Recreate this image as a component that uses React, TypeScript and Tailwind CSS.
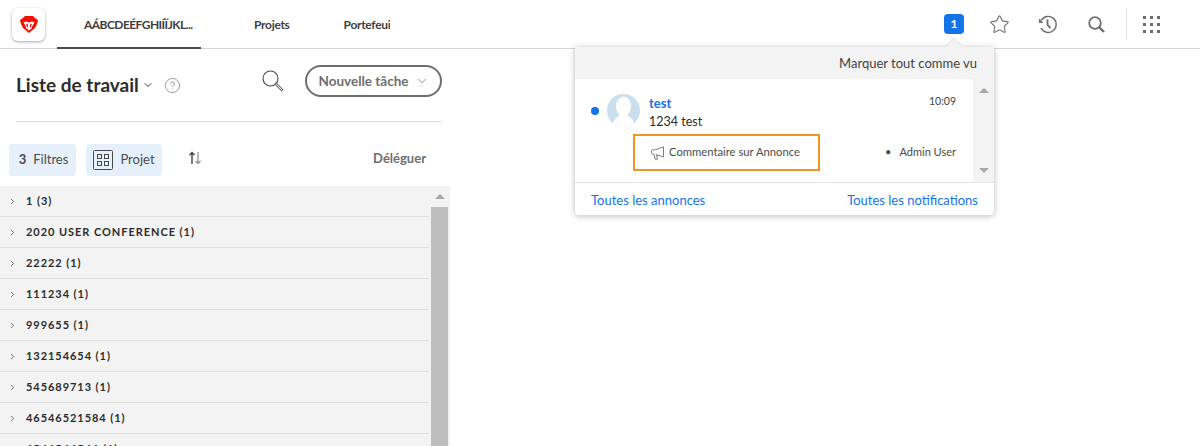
import { ChevronDown, ChevronRight, Star, HelpCircle } from "lucide-react";

const rows = [
  "1 (3)",
  "2020 USER CONFERENCE (1)",
  "22222 (1)",
  "111234 (1)",
  "999655 (1)",
  "132154654 (1)",
  "545689713 (1)",
  "46546521584 (1)",
  "6546546546 (1)",
];

function BraveLogo() {
  return (
    <svg width="18" height="18" viewBox="0 0 18 18">
      <path d="M5 0h8l2 2 3 2-1 4-2 4-6 5-6-5-2-4-1-4 3-2z" fill="#f50f00" />
      <path d="M3.500 6.500L6 5.500 9 6.500l3-1 2.500 1-2 3-1 3-2.500 2-2.500-2-1-3z" fill="#fff" />
      <path d="M6 7.500l2 1v3l-1-.5zM12 7.500l-2 1v3l1-.5z" fill="#f50f00" />
    </svg>
  );
}

function GridIcon() {
  return (
    <svg className="shrink-0" width="20" height="20" viewBox="0 0 20 20" fill="none" stroke="#4b4b4b" strokeWidth="1">
      <rect x="0.500" y="0.500" width="19" height="19" rx="1" />
      <rect x="4.500" y="4.500" width="4" height="4" />
      <rect x="11.500" y="4.500" width="4" height="4" />
      <rect x="4.500" y="11.500" width="4" height="4" />
      <rect x="11.500" y="11.500" width="4" height="4" />
    </svg>
  );
}

function SortIcon() {
  return (
    <svg width="14" height="14" viewBox="0 0 14 14" fill="none" strokeWidth="1.200">
      <path d="M4 13V1.500M1.500 4L4 1.500 6.500 4" stroke="#4b4b4b" strokeWidth="1.500" />
      <path d="M10 1v11.500M7.500 10l2.500 2.500 2.500-2.500" stroke="#8a8a8a" />
    </svg>
  );
}

function HistoryIcon() {
  return (
    <svg width="19" height="19" viewBox="0 0 19 19" fill="none" stroke="#6e6e6e" strokeWidth="1.400">
      <path d="M3.200 5.500A8 8 0 1 1 3 13" />
      <path d="M1 3.500v4.500h4.500z" fill="#6e6e6e" stroke="none" />
      <path d="M9.500 4.500v5.500l3 3" strokeWidth="1.800" />
    </svg>
  );
}

function TopSearchIcon() {
  return (
    <svg width="17" height="17" viewBox="0 0 17 17" fill="none" stroke="#6e6e6e">
      <circle cx="7" cy="7" r="5.800" strokeWidth="1.800" />
      <path d="M11 11l5 5" strokeWidth="2.400" />
    </svg>
  );
}

function ListSearchIcon() {
  return (
    <svg width="22" height="22" viewBox="0 0 22 22" fill="none" stroke="#4b4b4b">
      <circle cx="8.500" cy="8.500" r="7.500" strokeWidth="1.100" />
      <path d="M14 14l6 6" stroke="#6e6e6e" strokeWidth="2.600" strokeLinecap="round" />
      <path d="M14.500 14.500l5.500 5.500" stroke="#fff" strokeWidth="0.900" strokeLinecap="round" />
    </svg>
  );
}

function MegaphoneIcon() {
  return (
    <svg width="13" height="14" viewBox="0 0 13 14" fill="none" stroke="#6e6e6e" strokeWidth="0.900">
      <path d="M12.500 0.800L4.500 3.800H1.500L0.500 5v2l1 1.200h1.500l1 5h2.500l-1-4.500 7 2.200z" strokeLinejoin="round" />
    </svg>
  );
}

function Avatar() {
  return (
    <svg width="33" height="33" viewBox="0 0 33 33">
      <defs>
        <clipPath id="avatar-clip">
          <circle cx="16.500" cy="16.500" r="16.500" />
        </clipPath>
      </defs>
      <g clipPath="url(#avatar-clip)">
        <rect width="33" height="33" fill="#c9dfee" />
        <ellipse cx="16.500" cy="12.500" rx="7.500" ry="10" fill="#fff" />
        <path d="M5 33c1-8 6-11 8-12h7c2 1 7 4 8 12z" fill="#fff" />
      </g>
    </svg>
  );
}

function TopBar() {
  return (
    <div className="flex h-[49px] items-stretch border-b border-[#d5d5d5] bg-white">
      <div className="flex w-[57px] items-start pl-3 pt-2">
        <div className="flex h-[33px] w-[33px] items-center justify-center rounded-md bg-white shadow-[0_1px_3px_rgba(0,0,0,0.35)]">
          <BraveLogo />
        </div>
      </div>
      <div className="flex h-[49px] w-[144px] items-start justify-start border-b-2 border-[#4b4b4b] pl-[27px] pt-[17px]">
        <span className="text-[12px] leading-[16px] font-bold tracking-[-0.55px] text-[#3f3f3f]">AÁBCDEÉFGHIÍÏJKL...</span>
      </div>
      <div className="ml-[53px] pt-[17px] text-[12px] leading-[16px] font-bold tracking-[-0.3px] text-[#3f3f3f]">Projets</div>
      <div className="ml-[54px] w-[46px] overflow-hidden whitespace-nowrap pt-[17px] text-[12px] leading-[16px] font-bold tracking-[-0.3px] text-[#3f3f3f]">Portefeuille</div>
      <div className="ml-auto flex items-start">
        <div className="mt-[14px] flex h-5 w-5 items-center justify-center rounded-sm bg-[#1473e6] text-[12px] font-bold text-white">1</div>
        <Star className="ml-[25px] mt-[14px] h-[21px] w-[21px] text-[#6e6e6e]" strokeWidth={1.200} />
        <div className="ml-[28px] mt-[15px]">
          <HistoryIcon />
        </div>
        <div className="ml-[31px] mt-[16px]">
          <TopSearchIcon />
        </div>
        <div className="ml-[21px] mt-2 h-[32px] w-px bg-[#e3e3e3]" />
        <div className="ml-[16px] mr-[40px] mt-[16px] grid grid-cols-3 gap-[4px]">
          {Array.from({ length: 9 }).map((_, i) => (
            <span key={i} className="h-[3px] w-[3px] bg-[#6e6e6e]" />
          ))}
        </div>
      </div>
    </div>
  );
}

function WorkList() {
  return (
    <div className="flex w-[450px] flex-col">
      <div className="ml-4 mr-2 flex h-[73px] items-start border-b border-[#dcdcdc] pt-4">
        <h1 className="mt-[5px] w-[122px] shrink-0 whitespace-nowrap text-[19px] leading-[30px] font-bold text-[#2c2c2c]">Liste de travail</h1>
        <ChevronDown className="ml-[4px] mt-[14px] h-3 w-3 shrink-0 text-[#3f3f3f]" />
        <HelpCircle className="ml-[10px] mt-[12px] h-[17px] w-[17px] shrink-0 text-[#8a8a8a]" strokeWidth={1.200} />
        <div className="ml-[81px] mt-[5px] shrink-0">
          <ListSearchIcon />
        </div>
        <button className="ml-[21px] flex h-[32px] w-[137px] shrink-0 items-center justify-center gap-[6px] rounded-full border-2 border-[#6e6e6e] text-[13.500px] font-bold text-[#6e6e6e]">
          Nouvelle tâche
          <ChevronDown className="h-[14px] w-[14px]" strokeWidth={1.300} />
        </button>
      </div>
      <div className="flex h-[64px] items-start pl-[9px] pr-6 pt-[22px]">
        <div className="flex h-8 w-[67px] items-center justify-center gap-[7px] rounded bg-[#e6f0fa] pl-[2px] text-[13px] text-[#4b4b4b]">
          <span className="font-bold">3</span>
          <span>Filtres</span>
        </div>
        <div className="ml-[10px] flex h-8 w-[76px] items-center justify-center gap-[7px] rounded bg-[#e6f0fa] text-[13px] text-[#4b4b4b]">
          <GridIcon />
          <span>Projet</span>
        </div>
        <div className="ml-[26px] mt-[7px]">
          <SortIcon />
        </div>
        <div className="ml-auto mt-[5px] text-[13px] font-bold text-[#6e6e6e]">Déléguer</div>
      </div>
      <div className="flex h-[260px] overflow-hidden bg-[#f3f3f3]">
        <div className="w-[429px] shrink-0">
          {rows.map((row) => (
            <div key={row} className="flex h-[31px] items-center gap-[9px] border-b border-[#dedede] pl-[8px] pt-[1px]">
              <ChevronRight className="h-[9px] w-[9px] text-[#3f3f3f]" strokeWidth={2} />
              <span className="text-[11px] font-bold tracking-[0.95px] text-[#2c2c2c]">{row}</span>
            </div>
          ))}
        </div>
        <div className="ml-[2px] flex w-[17px] flex-col">
          <div className="flex h-[21px] items-center justify-center">
            <div className="h-0 w-0 border-x-[5px] border-b-[5px] border-x-transparent border-b-[#a8a8a8]" />
          </div>
          <div className="flex-1 bg-[#bebebe]" />
        </div>
      </div>
    </div>
  );
}

function NotificationPopover() {
  return (
    <div className="absolute left-[575px] top-[47px] w-[419px] rounded-b bg-white shadow-[0_1px_6px_rgba(0,0,0,0.28)]">
      <div className="absolute -top-[6px] left-[373px] h-3 w-3 rotate-45 bg-[#f3f3f3] shadow-[-1px_-1px_1px_rgba(0,0,0,0.08)]" />
      <div className="relative flex h-[32px] items-center justify-end bg-[#f3f3f3] pr-[17px] pt-[2px] text-[13px] text-[#3f3f3f]">
        Marquer tout comme vu
      </div>
      <div className="flex h-[104px] border-b border-[#e3e3e3]">
        <div className="relative flex-1 pt-[15px]">
          <div className="flex items-start pl-4">
            <span className="mt-[13px] h-2 w-2 rounded-full bg-[#1473e6]" />
            <div className="ml-2">
              <Avatar />
            </div>
            <div className="ml-[9px] flex-1">
              <div className="flex items-start justify-between pr-[17px]">
                <span className="text-[13px] leading-[18px] font-bold text-[#1473e6]">test</span>
                <span className="-mt-[1px] text-[10.500px] leading-[16px] text-[#3f3f3f]">10:09</span>
              </div>
              <div className="text-[12.500px] leading-[20px] text-[#2c2c2c]">1234 test</div>
            </div>
          </div>
          <div className="mt-[2px] flex items-center pr-[17px]">
            <div className="ml-[58px] flex h-[37px] w-[187px] items-center gap-[5px] border-2 border-[#f29423] pl-[16px] text-[11.250px] text-[#4b4b4b]">
              <MegaphoneIcon />
              Commentaire sur Annonce
            </div>
            <span className="ml-auto text-[11px] text-[#4b4b4b]">•&nbsp;&nbsp; Admin User</span>
          </div>
        </div>
        <div className="flex w-[21px] flex-col items-center justify-between bg-[#f3f3f3] py-[9px]">
          <div className="h-0 w-0 border-x-[5px] border-b-[5px] border-x-transparent border-b-[#a8a8a8]" />
          <div className="h-0 w-0 border-x-[5px] border-t-[5px] border-x-transparent border-t-[#a8a8a8]" />
        </div>
      </div>
      <div className="flex h-[32px] items-center justify-between px-4 pt-[3px] text-[13px] text-[#1473e6]">
        <span>Toutes les annonces</span>
        <span>Toutes les notifications</span>
      </div>
    </div>
  );
}

export default function App() {
  return (
    <div className="relative h-[446px] w-[1200px] overflow-hidden bg-white font-['Lato',sans-serif]">
      <TopBar />
      <WorkList />
      <NotificationPopover />
    </div>
  );
}
